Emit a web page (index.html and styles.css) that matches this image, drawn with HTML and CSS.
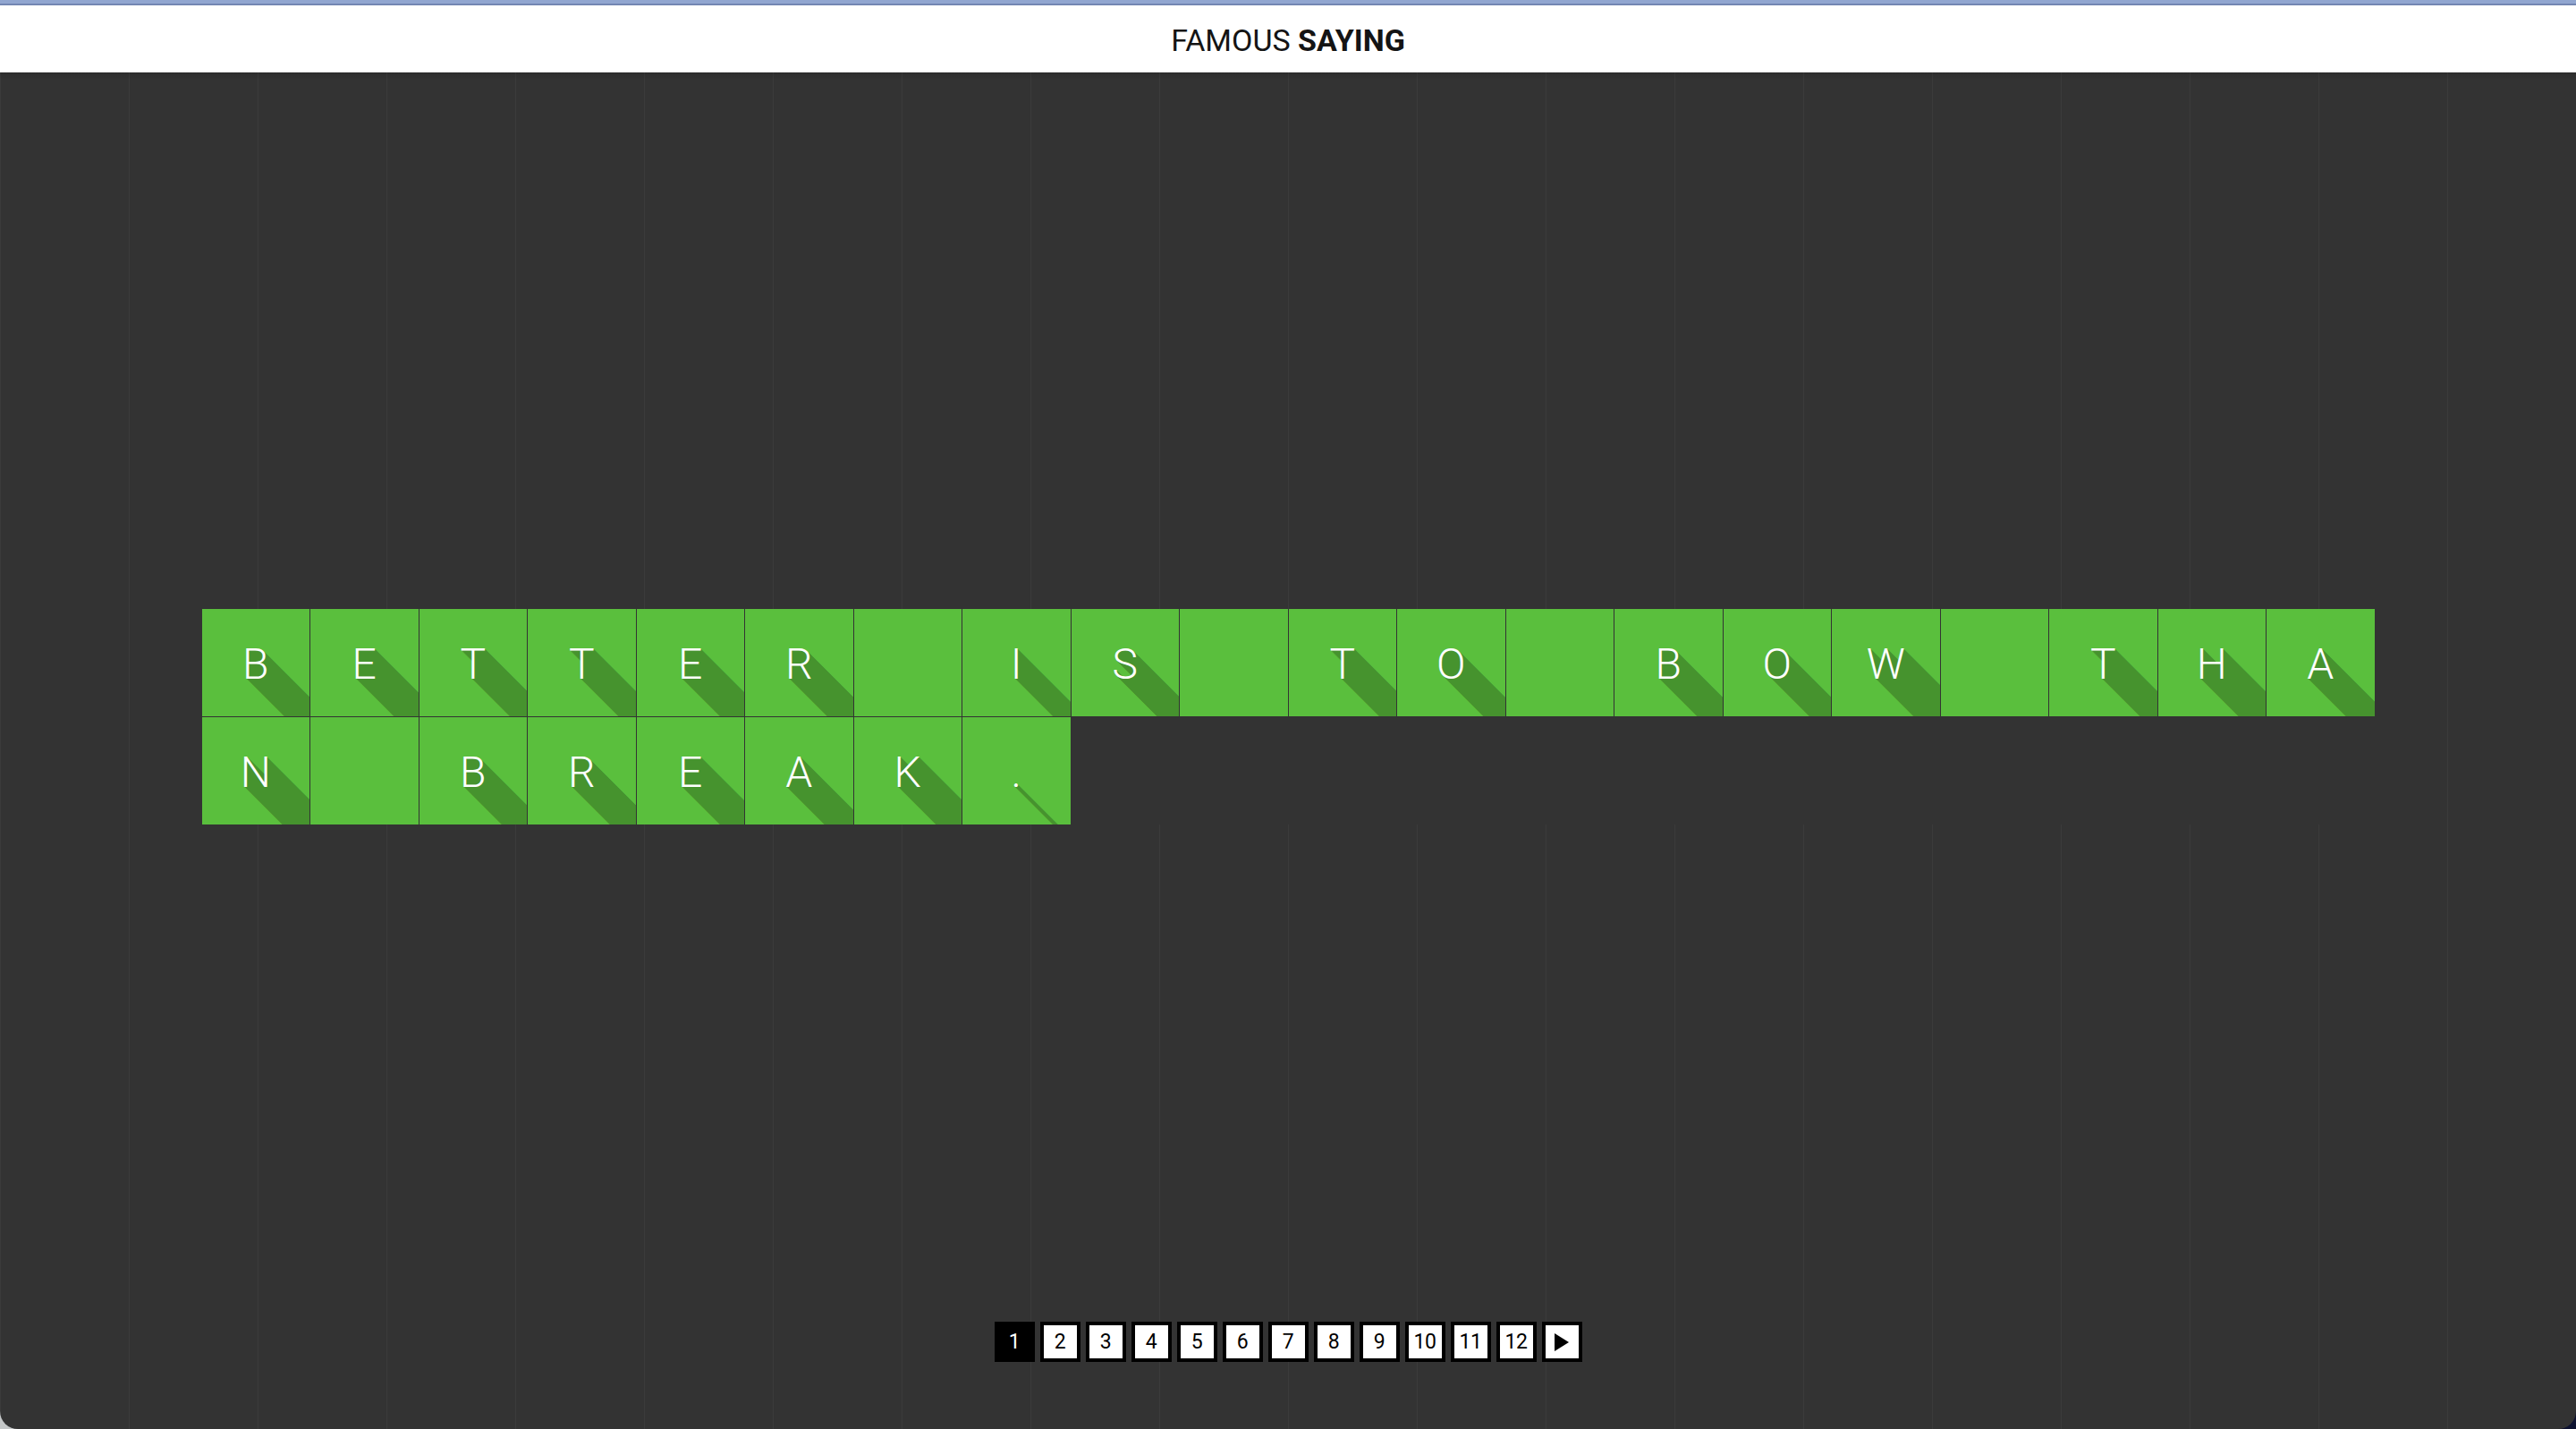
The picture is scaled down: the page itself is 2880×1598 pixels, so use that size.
FILE: index.html
```html
<!DOCTYPE html>
<html lang="en">
<head>
<meta charset="utf-8">
<title>Famous Saying</title>
<link rel="stylesheet" href="styles.css">
</head>
<body>
<div class="window">
  <div class="chrome-bar"></div>
  <header class="header">
    <h1 class="title">FAMOUS <b>SAYING</b></h1>
  </header>
  <main class="stage">
    <div class="board">
      <div class="tile">B</div>
      <div class="tile">E</div>
      <div class="tile">T</div>
      <div class="tile">T</div>
      <div class="tile">E</div>
      <div class="tile">R</div>
      <div class="tile"></div>
      <div class="tile">I</div>
      <div class="tile">S</div>
      <div class="tile"></div>
      <div class="tile">T</div>
      <div class="tile">O</div>
      <div class="tile"></div>
      <div class="tile">B</div>
      <div class="tile">O</div>
      <div class="tile">W</div>
      <div class="tile"></div>
      <div class="tile">T</div>
      <div class="tile">H</div>
      <div class="tile">A</div>
      <div class="tile">N</div>
      <div class="tile"></div>
      <div class="tile">B</div>
      <div class="tile">R</div>
      <div class="tile">E</div>
      <div class="tile">A</div>
      <div class="tile">K</div>
      <div class="tile">.</div>
    </div>
    <nav class="pager">
      <a class="page active">1</a>
      <a class="page">2</a>
      <a class="page">3</a>
      <a class="page">4</a>
      <a class="page">5</a>
      <a class="page">6</a>
      <a class="page">7</a>
      <a class="page">8</a>
      <a class="page">9</a>
      <a class="page">10</a>
      <a class="page">11</a>
      <a class="page">12</a>
      <a class="page next"><svg width="16" height="20" viewBox="0 0 16 20"><path d="M0 0 L16 10 L0 20 Z" fill="#000"/></svg></a>
    </nav>
  </main>
</div>
</body>
</html>
```
FILE: styles.css
```css
html, body {
  margin: 0;
  padding: 0;
}
html {
  background: linear-gradient(to right, #c4c7c8 0, #c4c7c8 50%, #0d1230 50%, #0d1230 100%);
}
body {
  font-family: Roboto, "Noto Sans", "Liberation Sans", sans-serif;
}
.window {
  width: 2880px;
  height: 1598px;
  display: flex;
  flex-direction: column;
}
.chrome-bar {
  height: 6px;
  background: linear-gradient(to bottom, #91a6d0 0, #91a6d0 4px, #7386b2 4px, #7386b2 6px);
}
.header {
  height: 75px;
  background: #fff;
  display: flex;
  align-items: center;
  justify-content: center;
}
.title {
  margin: 0;
  font-size: 34px;
  font-weight: 400;
  color: #141414;
  line-height: 1;
  padding-top: 2px;
}
.title b {
  font-weight: 700;
}
.stage {
  flex: 1;
  display: flex;
  flex-direction: column;
  align-items: center;
  padding-top: 600px;
  padding-bottom: 75px;
  box-sizing: border-box;
  border-radius: 0 0 20px 20px;
  background-color: #333;
  background-image:
    linear-gradient(to bottom, rgba(0,0,0,0.12) 0, rgba(0,0,0,0) 8px),
    repeating-linear-gradient(to right, #3b3b3b 0, #3b3b3b 1px, transparent 1px, transparent 144px);
}
.board {
  display: grid;
  grid-template-columns: repeat(20, 120.5px);
  grid-auto-rows: 120px;
  gap: 1px;
  width: 2429px;
  background: #333;
}
.tile {
  background: #5abf3d;
  color: #fff;
  overflow: hidden;
  text-align: center;
  font-size: 48px;
  font-weight: 300;
  line-height: 123px;
  height: 120px;
  text-shadow:
    1px 1px #46932e, 2px 2px #46932e, 3px 3px #46932e, 4px 4px #46932e, 5px 5px #46932e,
    6px 6px #46932e, 7px 7px #46932e, 8px 8px #46932e, 9px 9px #46932e, 10px 10px #46932e,
    11px 11px #46932e, 12px 12px #46932e, 13px 13px #46932e, 14px 14px #46932e, 15px 15px #46932e,
    16px 16px #46932e, 17px 17px #46932e, 18px 18px #46932e, 19px 19px #46932e, 20px 20px #46932e,
    21px 21px #46932e, 22px 22px #46932e, 23px 23px #46932e, 24px 24px #46932e, 25px 25px #46932e,
    26px 26px #46932e, 27px 27px #46932e, 28px 28px #46932e, 29px 29px #46932e, 30px 30px #46932e,
    31px 31px #46932e, 32px 32px #46932e, 33px 33px #46932e, 34px 34px #46932e, 35px 35px #46932e,
    36px 36px #46932e, 37px 37px #46932e, 38px 38px #46932e, 39px 39px #46932e, 40px 40px #46932e,
    41px 41px #46932e, 42px 42px #46932e, 43px 43px #46932e, 44px 44px #46932e, 45px 45px #46932e,
    46px 46px #46932e, 47px 47px #46932e, 48px 48px #46932e, 49px 49px #46932e, 50px 50px #46932e,
    51px 51px #46932e, 52px 52px #46932e, 53px 53px #46932e, 54px 54px #46932e, 55px 55px #46932e,
    56px 56px #46932e, 57px 57px #46932e, 58px 58px #46932e, 59px 59px #46932e, 60px 60px #46932e,
    61px 61px #46932e, 62px 62px #46932e, 63px 63px #46932e, 64px 64px #46932e, 65px 65px #46932e,
    66px 66px #46932e, 67px 67px #46932e, 68px 68px #46932e, 69px 69px #46932e, 70px 70px #46932e,
    71px 71px #46932e, 72px 72px #46932e, 73px 73px #46932e, 74px 74px #46932e, 75px 75px #46932e,
    76px 76px #46932e, 77px 77px #46932e, 78px 78px #46932e, 79px 79px #46932e, 80px 80px #46932e,
    81px 81px #46932e, 82px 82px #46932e, 83px 83px #46932e, 84px 84px #46932e, 85px 85px #46932e,
    86px 86px #46932e, 87px 87px #46932e, 88px 88px #46932e, 89px 89px #46932e, 90px 90px #46932e;
}
.pager {
  margin-top: auto;
  display: flex;
  gap: 6px;
}
.page {
  width: 45px;
  height: 45px;
  box-sizing: border-box;
  border: 4px solid #000;
  background: #fff;
  color: #000;
  display: flex;
  align-items: center;
  justify-content: center;
  font-size: 23px;
  font-weight: 400;
  line-height: 1;
  letter-spacing: -0.5px;
}
.page.active {
  background: #000;
  color: #fff;
}
.page.next svg {
  display: block;
}
```
